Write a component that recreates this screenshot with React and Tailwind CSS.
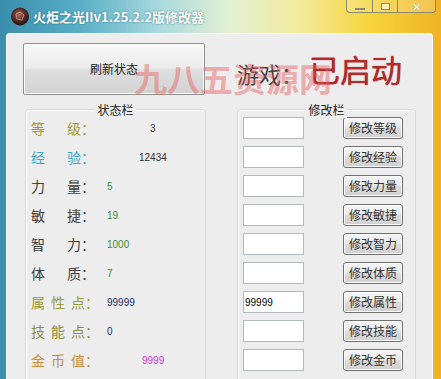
import React from "react";

const stats = [
  { label: "等级", color: "text-[#a89a28]", value: "3", vColor: "text-[#303030]", offset: "ml-[43px]" },
  { label: "经验", color: "text-[#38a8c8]", value: "12434", vColor: "text-[#303030]", offset: "ml-[32px]" },
  { label: "力量", color: "text-[#404040]", value: "5", vColor: "text-[#3c8c3c]", offset: "ml-0" },
  { label: "敏捷", color: "text-[#404040]", value: "19", vColor: "text-[#3c8c3c]", offset: "ml-0" },
  { label: "智力", color: "text-[#404040]", value: "1000", vColor: "text-[#3c8c3c]", offset: "ml-0" },
  { label: "体质", color: "text-[#404040]", value: "7", vColor: "text-[#3c8c3c]", offset: "ml-0" },
  { label: "属性点", color: "text-[#9c9a34]", value: "99999", vColor: "text-[#282860]", offset: "ml-0" },
  { label: "技能点", color: "text-[#8e8c3c]", value: "0", vColor: "text-[#282860]", offset: "ml-0" },
  { label: "金币值", color: "text-[#c88c3c]", value: "9999", vColor: "text-[#c040d0]", offset: "ml-[35px]" },
];

const edits = ["等级", "经验", "力量", "敏捷", "智力", "体质", "属性", "技能", "金币"];

const cjk = "font-['Noto_Sans_CJK_SC',sans-serif]";

const Label = ({ text }) => {
  if (text.length === 2) {
    return (
      <div className="flex w-[76px]">
        <span className="w-[36px]">{text[0]}</span>
        <span>{text[1]}</span>
        <span>：</span>
      </div>
    );
  }
  return (
    <div className="flex w-[76px]">
      {text.split("").map((c) => (
        <span key={c} className="w-[20px]">
          {c}
        </span>
      ))}
      <span className="-ml-[6px]">：</span>
    </div>
  );
};

const Group = ({ title, className, children }) => (
  <div
    className={`relative h-[300px] rounded-[3px] border border-[#d2dadf] shadow-[inset_1px_1px_0_#ffffff] pt-[7px] pl-[5px] ${className}`}
  >
    <div className="absolute -top-[8px] left-0 right-0 flex justify-center">
      <span className={`bg-[#ededed] px-[2px] text-[12px] leading-[16px] text-[#222] ${cjk}`}>
        {title}
      </span>
    </div>
    {children}
  </div>
);

export default function App() {
  return (
    <div className="relative h-[379px] w-[441px] overflow-hidden bg-[linear-gradient(to_right,#3a8eac_0%,#58aec6_18%,#a9d9de_36%,#e2f0d2_52%,#f3ea9c_68%,#f7d43a_84%,#efb224_100%)]">
      {/* TITLE BAR */}
      <div className="flex h-[33px] items-center pl-[10px]">
        <svg width="20" height="19" viewBox="0 0 20 19">
          <defs>
            <radialGradient id="ic" cx="45%" cy="40%" r="60%">
              <stop offset="0%" stopColor="#b07060" />
              <stop offset="55%" stopColor="#5a2e28" />
              <stop offset="100%" stopColor="#1e1412" />
            </radialGradient>
          </defs>
          <circle cx="10" cy="9.5" r="9" fill="url(#ic)" />
          <path d="M6 7 L10 5 L14 8 L12 13 L7 12 Z" fill="none" stroke="#d8a090" strokeWidth="1" opacity="0.7" />
        </svg>
        <span
          className={`ml-[3px] text-[13px] font-bold text-white [text-shadow:0_0_2px_#2a6a80] ${cjk}`}
        >
          火炬之光IIv1.25.2.2版修改器
        </span>
      </div>

      {/* WINDOW BUTTONS */}
      <div className="absolute right-[5px] top-0 flex h-[13px]">
        <div className="flex w-[27px] items-end justify-center rounded-bl-[4px] border border-t-0 border-[#8a8a70] bg-white/20 pb-[2px]">
          <div className="h-[2px] w-[10px] border border-[#8a8a80] bg-white/70" />
        </div>
        <div className="flex w-[25px] items-center justify-center border border-l-0 border-t-0 border-[#8a8a70] bg-white/20">
          <div className="h-[7px] w-[9px] border border-[#8a8a80] bg-white/60" />
        </div>
        <div className="flex w-[38px] items-center justify-center rounded-br-[4px] border border-l-0 border-t-0 border-[#8a8a70] bg-white/20 text-[11px] leading-none text-white [text-shadow:0_0_1px_#777]">
          ✕
        </div>
      </div>

      {/* CLIENT AREA */}
      <div className="ml-[6px] mr-[8px] h-[346px] rounded-t-[4px] border border-b-0 border-white/80 bg-[#ededed]">
        <div className="flex items-center pt-[9px]">
          <button
            className={`ml-[16px] h-[52px] w-[182px] rounded-[2px] border border-[#8e8f8f] bg-[linear-gradient(#f8f8f8,#ececec_48%,#dedede_52%,#d2d2d2)] text-[12px] text-[#222] shadow-[inset_0_0_0_1px_#fcfcfc] ${cjk}`}
          >
            刷新状态
          </button>
          <div className={`ml-[32px] flex items-end ${cjk}`}>
            <span className="text-[22px] leading-[30px] text-[#404040]">游戏：</span>
            <span className="ml-[6px] text-[31px] leading-[38px] text-[#b82828] [text-shadow:0_0_1px_#702020]">
              已启动
            </span>
          </div>
        </div>

        <div className="mt-[14px] flex">
          <Group title="状态栏" className="ml-[18px] w-[181px]">
            <div className={`flex flex-col gap-[7px] ${cjk}`}>
              {stats.map((s) => (
                <div key={s.label} className="flex h-[22px] items-center">
                  <div className={`text-[14px] ${s.color}`}>
                    <Label text={s.label} />
                  </div>
                  <span
                    className={`${s.offset} font-['Liberation_Sans',sans-serif] text-[10px] ${s.vColor}`}
                  >
                    {s.value}
                  </span>
                </div>
              ))}
            </div>
          </Group>

          <Group title="修改栏" className="ml-[31px] w-[179px]">
            <div className="flex flex-col gap-[7px]">
              {edits.map((e) => (
                <div key={e} className="flex h-[22px] items-center">
                  <input
                    readOnly
                    value={e === "属性" ? "99999" : ""}
                    className="h-[22px] w-[61px] border border-[#b4b9be] bg-white px-[1px] font-['Liberation_Sans',sans-serif] text-[10px] text-black outline-none"
                  />
                  <button
                    className={`ml-[39px] h-[22px] w-[60px] rounded-[3px] border border-[#707070] bg-[linear-gradient(#f6f6f6,#e8e8e8_50%,#dcdcdc_51%,#d0d0d0)] text-[12px] leading-none text-[#333] shadow-[inset_0_0_0_1px_#fbfbfb] ${cjk}`}
                  >
                    修改{e}
                  </button>
                </div>
              ))}
            </div>
          </Group>
        </div>
      </div>

      {/* WATERMARK */}
      <div
        className={`pointer-events-none absolute left-[134px] top-[58px] text-[33px] font-bold leading-[40px] text-[#e85a5a]/45 ${cjk}`}
      >
        九八五资源网
      </div>
    </div>
  );
}
